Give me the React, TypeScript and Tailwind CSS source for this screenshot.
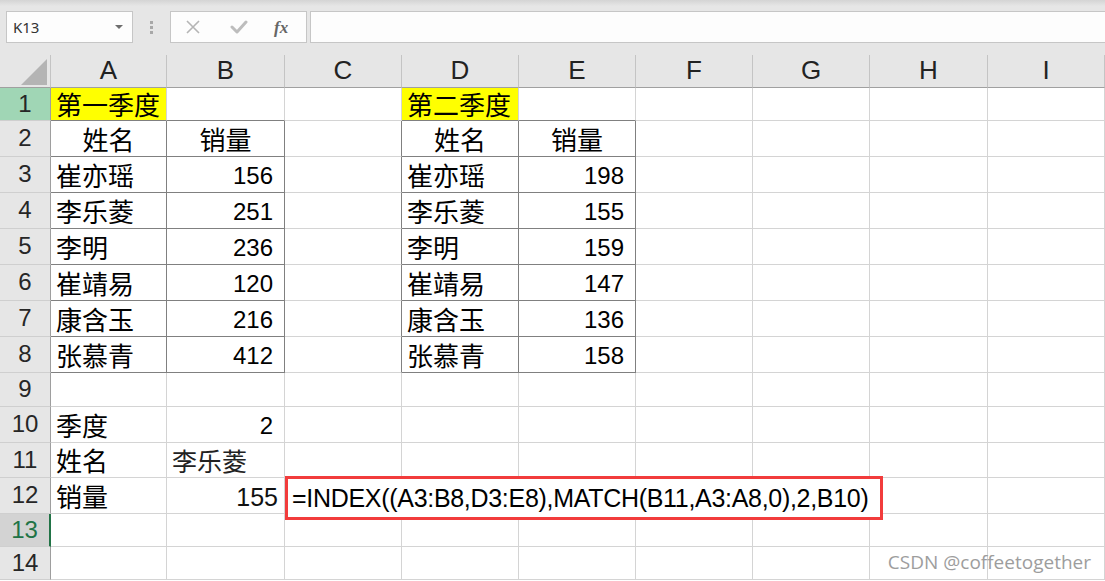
import React from "react";

type Cell = {
  t?: string;
  al?: "l" | "r" | "c";
  yellow?: boolean;
  dr?: boolean; // dark right border
  db?: boolean; // dark bottom border
  light?: boolean;
  tight?: boolean;
};

const names1 = ["崔亦瑶", "李乐菱", "李明", "崔靖易", "康含玉", "张慕青"];
const nums1 = ["156", "251", "236", "120", "216", "412"];
const nums2 = ["198", "155", "159", "147", "136", "158"];

function buildRows(): Cell[][] {
  const rows: Cell[][] = [];
  for (let r = 0; r < 14; r++) {
    const row: Cell[] = [];
    for (let c = 0; c < 9; c++) row.push({});
    rows.push(row);
  }
  rows[0][0] = { t: "第一季度", al: "l", yellow: true, db: true };
  rows[0][1] = { db: true };
  rows[0][3] = { t: "第二季度", al: "l", yellow: true, db: true };
  rows[0][4] = { db: true };
  rows[1][0] = { t: "姓名", al: "c", dr: true, db: true };
  rows[1][1] = { t: "销量", al: "c", dr: true, db: true };
  rows[1][2] = { dr: true };
  rows[1][3] = { t: "姓名", al: "c", dr: true, db: true };
  rows[1][4] = { t: "销量", al: "c", dr: true, db: true };
  for (let i = 0; i < 6; i++) {
    const r = i + 2;
    rows[r][0] = { t: names1[i], al: "l", dr: true, db: true };
    rows[r][1] = { t: nums1[i], al: "r", dr: true, db: true };
    rows[r][2] = { dr: true };
    rows[r][3] = { t: names1[i], al: "l", dr: true, db: true };
    rows[r][4] = { t: nums2[i], al: "r", dr: true, db: true };
  }
  rows[9][0] = { t: "季度", al: "l" };
  rows[9][1] = { t: "2", al: "r" };
  rows[10][0] = { t: "姓名", al: "l" };
  rows[10][1] = { t: "李乐菱", al: "l", light: true };
  rows[11][0] = { t: "销量", al: "l" };
  rows[11][1] = { t: "155", al: "r", tight: true };
  return rows;
}

const COLS = ["A", "B", "C", "D", "E", "F", "G", "H", "I"];

function GridCell({ cell }: { cell: Cell }) {
  const borderR = cell.dr ? "border-r-[#808080]" : "border-r-[#d4d4d4]";
  const borderB = cell.db ? "border-b-[#808080]" : "border-b-[#d4d4d4]";
  const bg = cell.yellow ? "bg-[#ffff00]" : "bg-white";
  const justify =
    cell.al === "r" ? "justify-end" : cell.al === "c" ? "justify-center" : "justify-start";
  const pad = cell.al === "r" ? (cell.tight ? "pr-[6px]" : "pr-[11px]") : cell.al === "l" ? "pl-[5px]" : "";
  const isNum = cell.t !== undefined && /^[0-9]+$/.test(cell.t);
  const textCls = isNum
    ? cell.tight
      ? "mt-[2px] text-[25px] text-[#111] font-['Liberation_Sans',sans-serif]"
      : "mt-[3px] text-[24px] text-black font-['Liberation_Sans',sans-serif]"
    : cell.light
    ? "text-[25px] text-[#222] font-['Noto_Sans_CJK_SC',sans-serif]"
    : "text-[26px] text-black font-['Noto_Sans_CJK_SC',sans-serif]";
  return (
    <div className={`flex items-center border-r border-b ${borderR} ${borderB} ${bg} ${justify} ${pad}`}>
      {cell.t && <span className={`leading-[1.2] whitespace-nowrap ${textCls}`}>{cell.t}</span>}
    </div>
  );
}

export default function App() {
  const rows = buildRows();
  return (
    <div className="relative w-[1105px] h-[581px] overflow-hidden bg-white font-['Liberation_Sans',sans-serif]">
      {/* toolbar */}
      <div className="flex flex-col h-[55px] bg-[#e6e6e6]">
        <div className="h-[6px] bg-linear-to-b from-[#d4d4d4] to-[#e6e6e6]" />
        <div className="flex items-center mt-[5px] h-[32px]">
          <div className="ml-[6px] w-[127px] h-[32px] bg-[#fdfdfd] border border-[#c6c6c6] flex items-center justify-between pl-[6px] pr-[9px]">
            <span className="text-[15px] text-[#333] font-['Noto_Sans',sans-serif]">K13</span>
            <span className="w-0 h-0 border-l-[4px] border-r-[4px] border-t-[4px] border-l-transparent border-r-transparent border-t-[#6e6e6e]" />
          </div>
          <div className="w-[37px] flex flex-col items-center gap-[2px]">
            <span className="w-[3px] h-[3px] bg-[#a8a8a8]" />
            <span className="w-[3px] h-[3px] bg-[#a8a8a8]" />
            <span className="w-[3px] h-[3px] bg-[#a8a8a8]" />
          </div>
          <div className="w-[137px] h-[32px] bg-[#fdfdfd] border border-[#c6c6c6] flex items-center">
            <svg width="16" height="16" viewBox="0 0 16 16" className="ml-[14px]">
              <path d="M2 2 L14 14 M14 2 L2 14" stroke="#b5b5b5" strokeWidth="1.6" fill="none" />
            </svg>
            <svg width="18" height="16" viewBox="0 0 18 16" className="ml-[29px]">
              <path d="M2 8 L7 13 L16 3" stroke="#bdbdbd" strokeWidth="3" fill="none" strokeLinecap="round" strokeLinejoin="round" />
            </svg>
            <span className="ml-[26px] italic font-bold text-[17px] text-[#666] font-['Liberation_Serif',serif] leading-none">fx</span>
          </div>
          <div className="ml-[3px] flex-1 h-[32px] bg-[#fdfdfd] border border-r-0 border-[#c6c6c6]" />
        </div>
      </div>

      {/* grid */}
      <div className="relative grid grid-cols-[51px_116px_118px_117px_117px_117px_117px_117px_118px_117px] grid-rows-[33px_33px_36px_36px_36px_36px_36px_36px_36px_34px_36px_35px_36px_33px_33px]">
        <div className="relative bg-[#e6e6e6] border-r border-b border-r-[#c4c4c4] border-b-[#a0a0a0]">
          <svg width="26" height="26" viewBox="0 0 26 26" className="absolute right-[3px] bottom-[2px]">
            <polygon points="26,0 26,26 0,26" fill="#b4b4b4" />
          </svg>
        </div>
        {COLS.map((c) => (
          <div
            key={c}
            className="flex items-center justify-center bg-[#e6e6e6] border-r border-b border-r-[#c4c4c4] border-b-[#a0a0a0]"
          >
            <span className="text-[26px] leading-[1.2] text-[#222] font-['Liberation_Sans_Narrow','Liberation_Sans',sans-serif]">{c}</span>
          </div>
        ))}
        {rows.map((row, ri) => (
          <React.Fragment key={ri}>
            <div
              className={
                ri === 0
                  ? "flex items-center justify-center bg-[#a0d6b5] border-r border-b border-r-[#9e9e9e] border-b-[#cfcfcf]"
                  : ri === 12
                  ? "flex items-center justify-center bg-[#d3d3d3] border-r-[2px] border-b border-r-[#217346] border-b-[#cfcfcf]"
                  : "flex items-center justify-center bg-[#e6e6e6] border-r border-b border-r-[#9e9e9e] border-b-[#cfcfcf]"
              }
            >
              <span
                className={
                  ri === 12
                    ? "text-[24px] leading-[1.2] text-[#217346] font-['Liberation_Sans',sans-serif]"
                    : "text-[24px] leading-[1.2] text-[#262626] font-['Liberation_Sans',sans-serif]"
                }
              >
                {ri + 1}
              </span>
            </div>
            {row.map((cell, ci) => (
              <GridCell key={ci} cell={cell} />
            ))}
          </React.Fragment>
        ))}

        {/* annotated formula (overflowing text of C12 with red highlight box) */}
        <div className="absolute left-[285px] top-[421px] w-[598px] h-[44px] bg-white border-[3px] border-[#f23c3c] flex items-center pl-[4px]">
          <span className="text-[25px] leading-[1.2] tracking-[-0.3px] text-black whitespace-nowrap font-['Liberation_Sans',sans-serif]">
            =INDEX((A3:B8,D3:E8),MATCH(B11,A3:A8,0),2,B10)
          </span>
        </div>
      </div>

      {/* watermark */}
      <div className="absolute right-[14px] bottom-[9px] text-[19px] leading-none text-[#9d9d9d] font-['Open_Sans',sans-serif]">
        CSDN @coffeetogether
      </div>
    </div>
  );
}
